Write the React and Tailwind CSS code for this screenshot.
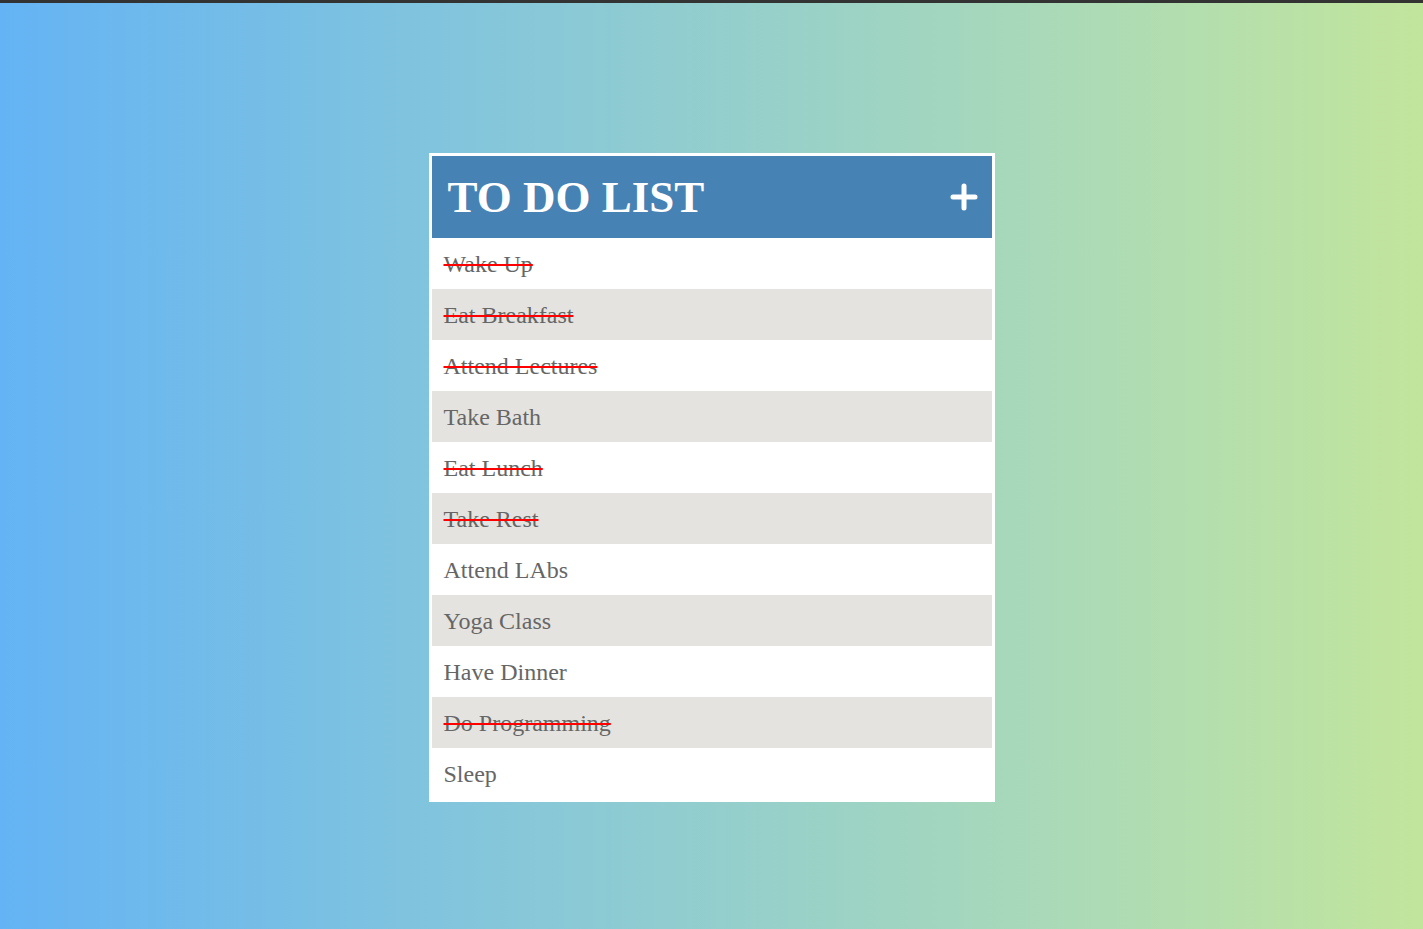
import React from 'react';

const todos = [
  { text: 'Wake Up', done: true },
  { text: 'Eat Breakfast', done: true },
  { text: 'Attend Lectures', done: true },
  { text: 'Take Bath', done: false },
  { text: 'Eat Lunch', done: true },
  { text: 'Take Rest', done: true },
  { text: 'Attend LAbs', done: false },
  { text: 'Yoga Class', done: false },
  { text: 'Have Dinner', done: false },
  { text: 'Do Programming', done: true },
  { text: 'Sleep', done: false },
];

const PlusIcon = () => (
  <svg width="28" height="28" viewBox="0 0 28 28" className="block">
    <path d="M14 3v22M3 14h22" stroke="#fff" strokeWidth="5" strokeLinecap="round" />
  </svg>
);

const App = () => {
  return (
    <div className="min-h-[929px] w-full bg-gradient-to-r from-[#64b3f4] to-[#c2e59c] font-['Liberation_Serif',serif]">
      <div className="h-[3px] bg-[#333]" />
      <div className="flex justify-center pt-[150px]">
        <div className="w-[566px] border-[3px] border-white bg-white">
          <div className="flex h-[82px] items-center justify-between bg-[#4682b4] pl-4 pr-[14px]">
            <h1 className="text-[45px] font-bold leading-none text-white">TO DO LIST</h1>
            <PlusIcon />
          </div>
          <ul>
            {todos.map((todo, i) => (
              <li
                key={todo.text}
                className={`flex h-[51px] items-center px-3 text-[24px] text-[#666] ${
                  i % 2 === 1 ? 'bg-[#e4e3e0]' : 'bg-white'
                }`}
              >
                <span className={todo.done ? 'line-through decoration-[#ff0000] decoration-2' : ''}>
                  {todo.text}
                </span>
              </li>
            ))}
          </ul>
        </div>
      </div>
    </div>
  );
};

export default App;
